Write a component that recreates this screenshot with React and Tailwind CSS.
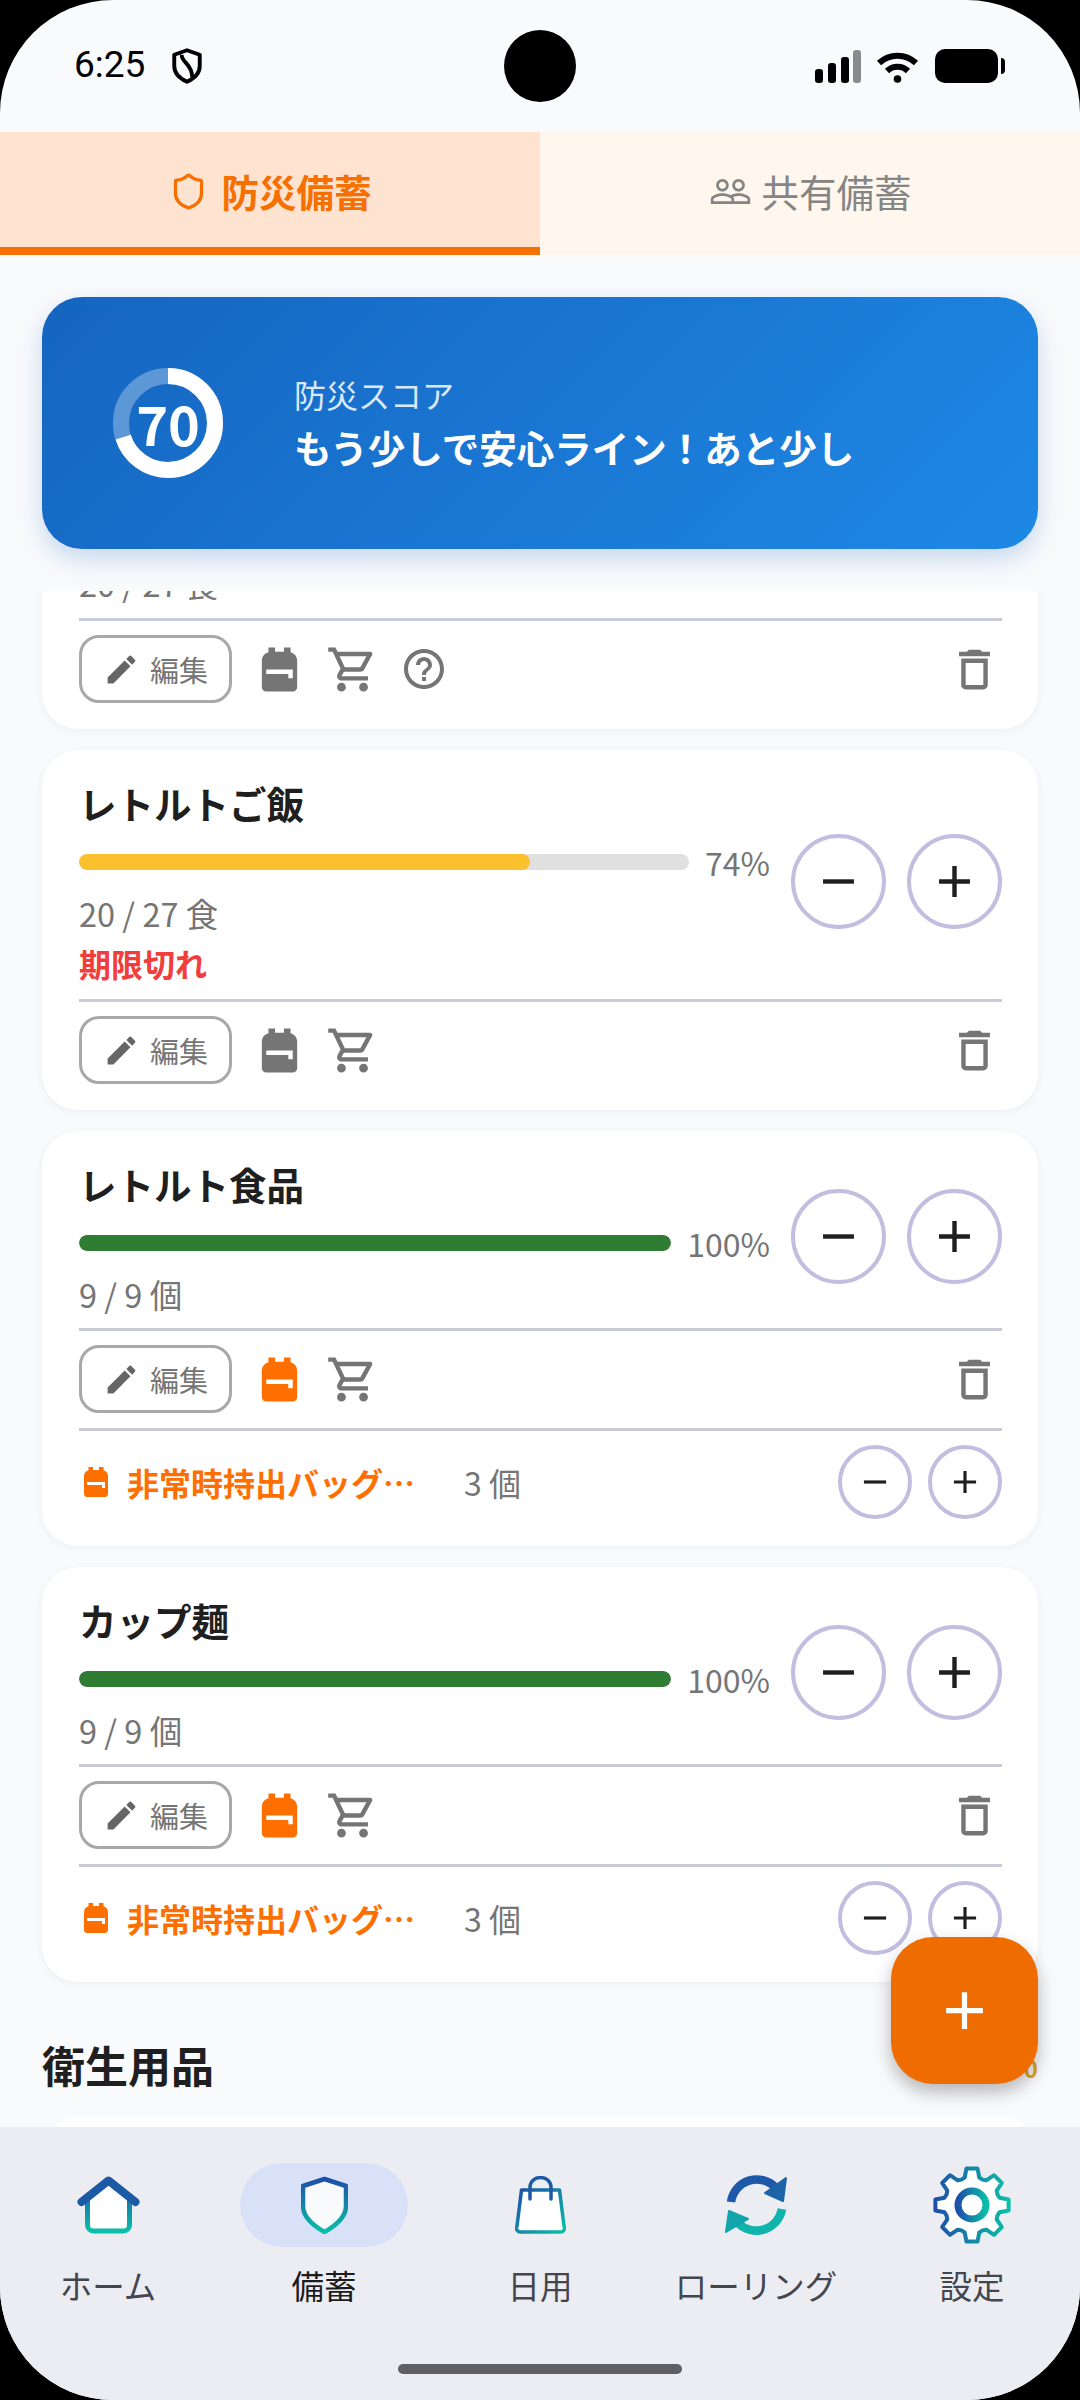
import React from 'react';
import { Shield } from 'lucide-react';
import {
  MdBackpack,
  MdEdit,
  MdOutlineShoppingCart,
  MdHelpOutline,
  MdDeleteOutline,
  MdPeopleOutline,
  MdAdd,
  MdRemove,
} from 'react-icons/md';

const items = [
  { name: 'レトルトご飯', pct: 74, color: 'bg-[#fbc02d]', count: '20 / 27 食', expired: true },
  { name: 'レトルト食品', pct: 100, color: 'bg-[#2e7d32]', count: '9 / 9 個', bag: true },
  { name: 'カップ麺', pct: 100, color: 'bg-[#2e7d32]', count: '9 / 9 個', bag: true },
];

function gearPath(cx, cy, outer, root) {
  const pts = [];
  for (let i = 0; i < 8; i++) {
    const a = (i * Math.PI) / 4 - Math.PI / 2;
    const p = (r, d) => `${(cx + r * Math.cos(a + d)).toFixed(1)} ${(cy + r * Math.sin(a + d)).toFixed(1)}`;
    pts.push(p(root, -0.26), p(outer, -0.15), p(outer, 0.15), p(root, 0.26), p(root - 1, 0.39));
  }
  return 'M' + pts.join(' L') + ' Z';
}

function StepButtons({ small }) {
  const box = small ? 'w-[74px] h-[74px]' : 'w-[95px] h-[95px]';
  const icon = small ? 38 : 53;
  return (
    <div className={small ? 'flex gap-[16px]' : 'flex gap-[21px]'}>
      <div className={`${box} rounded-full border-[4px] border-[#c2bedf] flex items-center justify-center text-[#1f1f1f]`}>
        <MdRemove size={icon} />
      </div>
      <div className={`${box} rounded-full border-[4px] border-[#c2bedf] flex items-center justify-center text-[#1f1f1f]`}>
        <MdAdd size={icon} />
      </div>
    </div>
  );
}

function ActionRow({ bagActive, help }) {
  return (
    <div className="flex items-center mt-[14px] text-[#757575]">
      <div className="w-[153px] h-[68px] rounded-[20px] border-[3px] border-[#a8a8a8] flex items-center pl-[21px] gap-[10px]">
        <MdEdit size={37} className="text-[#666666]" />
        <span className="text-[29px] leading-none">編集</span>
      </div>
      <MdBackpack size={53} className={bagActive ? 'ml-[21px] text-[#ff6f00]' : 'ml-[21px]'} />
      <MdOutlineShoppingCart size={53} className="ml-[20px]" />
      {help && <MdHelpOutline size={48} className="ml-[21px]" />}
      <MdDeleteOutline size={53} className="ml-auto mr-[1px]" />
    </div>
  );
}

function ItemCard({ item }) {
  return (
    <div className="bg-white rounded-[36px] shadow-[0_2px_10px_rgba(30,40,90,0.05)] pl-[37px] pr-[36px] pt-[30px] pb-[26px]">
      <div className="flex items-center">
        <div className="flex-1 min-w-0">
          <div className="h-[46px] flex items-center text-[37.5px] font-bold text-[#1f1f1f]">{item.name}</div>
          <div className="flex items-center h-[40px] mt-[16px]">
            <div className="flex-1 h-[16px] rounded-full bg-[#e0e0e0] overflow-hidden">
              <div className={`h-full rounded-full ${item.color}`} style={{ width: `${item.pct}%` }} />
            </div>
            <span className="ml-[16px] text-[32px] leading-none text-[#757575]">{item.pct}%</span>
          </div>
          <div className="h-[34px] mt-[14px] flex items-center text-[32.5px] text-[#757575]">{item.count}</div>
          {item.expired && (
            <div className="h-[38px] mt-[14px] flex items-center text-[32px] font-bold text-[#f23d3d]">期限切れ</div>
          )}
        </div>
        <div className="ml-[21px] shrink-0">
          <StepButtons />
        </div>
      </div>
      <div className="h-[3px] bg-[#c9cbd8] mt-[17px]" />
      <ActionRow bagActive={item.bag} />
      {item.bag && (
        <>
          <div className="h-[3px] bg-[#c9cbd8] mt-[15px]" />
          <div className="flex items-center mt-[14px] mb-[1px]">
            <MdBackpack size={36} className="text-[#ff6f00] ml-[-1px] mr-[13px]" />
            <span className="w-[337px] text-[32px] leading-none font-bold text-[#ff6f00] whitespace-nowrap">非常時持出バッグ…</span>
            <span className="text-[32px] leading-none text-[#757575]">3 個</span>
            <div className="ml-auto">
              <StepButtons small />
            </div>
          </div>
        </>
      )}
    </div>
  );
}

function NavIcon({ id, children, w, h, dir = 'v' }) {
  return (
    <svg width={w} height={h} viewBox={`0 0 ${w} ${h}`} fill="none">
      <defs>
        <linearGradient id={id} x1="0" y1="0" x2={dir === 'v' ? '0' : '1'} y2={dir === 'h' ? '0' : '1'}>
          <stop offset="0" stopColor="#1e4fa8" />
          <stop offset="1" stopColor="#0abfa8" />
        </linearGradient>
      </defs>
      {children}
    </svg>
  );
}

const HomeIcon = () => (
  <NavIcon id="g-home" w={63} h={58}>
    <path d="M10.5 22V49a6 6 0 0 0 6 6H46.500a6 6 0 0 0 6-6V22L31.500 6Z" fill="#fff" stroke="url(#g-home)" strokeWidth="5" strokeLinejoin="round" />
    <path d="M4.500 26L31.500 4.500L58.500 26" stroke="#1d5aa6" strokeWidth="8" strokeLinecap="round" strokeLinejoin="round" />
  </NavIcon>
);

const ShieldIcon = () => (
  <NavIcon id="g-shield" w={47} h={58}>
    <path d="M23.5 3L45 10V30C45 42 34 50 23.5 56C13 50 2 42 2 30V10Z" fill="#f8fafc" stroke="url(#g-shield)" strokeWidth="4.500" strokeLinejoin="round" />
  </NavIcon>
);

const BagIcon = () => (
  <NavIcon id="g-bag" w={51} h={58} dir="d">
    <path d="M6.5 14H44.5L49 50a4 4 0 0 1-4 6H6a4 4 0 0 1-4-6Z" fill="#fff" stroke="url(#g-bag)" strokeWidth="3.5" strokeLinejoin="round" />
    <path d="M15 23V11a10.500 9.500 0 0 1 21 0V23" stroke="#1d5aa6" strokeWidth="3.500" strokeLinecap="round" />
  </NavIcon>
);

const RefreshIcon = () => (
  <NavIcon id="g-ref" w={67} h={67}>
    <path d="M8 30A26 26 0 0 1 53 16" stroke="#1e58a8" strokeWidth="8.500" />
    <path d="M63 6L60 29L42 21Z" fill="#1d63a8" stroke="#1d63a8" strokeWidth="2" strokeLinejoin="round" />
    <path d="M59 37A26 26 0 0 1 15 51" stroke="#0fb4aa" strokeWidth="8.500" />
    <path d="M3 60L6 39L25 47Z" fill="#11a5ab" stroke="#11a5ab" strokeWidth="2" strokeLinejoin="round" />
  </NavIcon>
);

const GearIcon = () => (
  <NavIcon id="g-gear" w={80} h={80} dir="h">
    <path d={gearPath(40, 40, 37, 28.5)} fill="#fff" stroke="url(#g-gear)" strokeWidth="4" strokeLinejoin="round" />
    <circle cx="40" cy="40" r="14" fill="#fff" stroke="url(#g-gear)" strokeWidth="7" />
  </NavIcon>
);

const navItems = [
  { label: 'ホーム', Icon: HomeIcon },
  { label: '備蓄', Icon: ShieldIcon, active: true },
  { label: '日用', Icon: BagIcon },
  { label: 'ローリング', Icon: RefreshIcon },
  { label: '設定', Icon: GearIcon },
];

export default function App() {
  return (
    <div className="w-[1080px] h-[2400px] bg-black font-['Noto_Sans_CJK_JP','Noto_Sans',sans-serif]">
      <div className="relative w-full h-full rounded-[113px] overflow-hidden bg-[#f9fafc] flex flex-col">
        {/* status bar */}
        <div className="relative h-[132px] shrink-0 flex items-start">
          <span className="absolute left-[74px] top-[46px] font-['Roboto',sans-serif] text-[37px] leading-none text-black">6:25</span>
          <svg className="absolute left-[169px] top-[47px]" width="36" height="38" viewBox="0 0 24 25" fill="none" stroke="#000" strokeWidth="2.600" strokeLinejoin="round">
            <path d="M12 2L20.500 5V12.500C20.500 17.500 16.500 21 12 23C7.500 21 3.500 17.500 3.500 12.500V5Z" />
            <path d="M8.500 5C8 10 15.500 11 15.500 20" />
          </svg>
          <div className="absolute left-[504px] top-[30px] w-[72px] h-[72px] rounded-full bg-black" />
          <svg className="absolute left-[815px] top-[50px]" width="46" height="33" viewBox="0 0 46 33">
            <rect x="0" y="19" width="8" height="14" rx="3" fill="#000" />
            <rect x="13" y="13" width="8" height="20" rx="3" fill="#000" />
            <rect x="26" y="7" width="8" height="26" rx="3" fill="#000" />
            <rect x="38" y="0" width="8" height="33" rx="3" fill="#8a8a8a" />
          </svg>
          <svg className="absolute left-[876px] top-[50px]" width="43" height="33" viewBox="0 0 43 33" fill="none" stroke="#000" strokeWidth="6">
            <path d="M3 13A27 27 0 0 1 40 13" />
            <path d="M11 21A15 15 0 0 1 32 21" />
            <circle cx="21.500" cy="29" r="3.800" fill="#000" stroke="none" />
          </svg>
          <div className="absolute left-[935px] top-[49px] w-[63px] h-[34px] rounded-[10px] bg-black" />
          <div className="absolute left-[1001px] top-[58px] w-[4px] h-[16px] rounded-r-full bg-black" />
        </div>

        {/* tabs */}
        <div className="h-[123px] shrink-0 flex">
          <div className="flex-1 bg-[#fde3d0] border-b-[8px] border-[#f57000] flex items-center justify-center gap-[14px] text-[#f57000] pt-[3px]">
            <Shield size={39} strokeWidth={2} />
            <span className="text-[37.5px] font-bold leading-none">防災備蓄</span>
          </div>
          <div className="flex-1 bg-[#fff7ed] flex items-center justify-center gap-[10px] text-[#858585] pb-[5px]">
            <MdPeopleOutline size={43} />
            <span className="text-[37.5px] leading-none">共有備蓄</span>
          </div>
        </div>

        {/* score */}
        <div className="mx-[42px] mt-[42px] h-[252px] shrink-0 rounded-[40px] bg-[linear-gradient(135deg,#1565c0,#1e88e5)] shadow-[0_10px_24px_rgba(21,101,192,0.22)] flex items-center pl-[71px]">
          <div className="relative w-[110px] h-[110px] shrink-0">
            <svg width="110" height="110" viewBox="0 0 110 110" fill="none" className="-rotate-90">
              <circle cx="55" cy="55" r="47" stroke="#ffffff" strokeOpacity="0.3" strokeWidth="16" />
              <circle cx="55" cy="55" r="47" stroke="#ffffff" strokeWidth="16" strokeDasharray="206.700 295.300" />
            </svg>
            <span className="absolute inset-0 flex items-center justify-center text-[54px] font-bold leading-none text-white">70</span>
          </div>
          <div className="ml-[71px]">
            <div className="text-[32px] leading-[40px] text-[#dbe8f8]">防災スコア</div>
            <div className="text-[37.5px] leading-[50px] mt-[8px] font-bold text-white">もう少しで安心ライン！あと少し</div>
          </div>
        </div>

        {/* scrolling list */}
        <div className="mt-[42px] flex-1 min-h-0 overflow-hidden px-[42px]">
          <div className="-mt-[171px] flex flex-col gap-[21px]">
            <div className="bg-white rounded-[36px] shadow-[0_2px_10px_rgba(30,40,90,0.05)] pl-[37px] pr-[36px] pt-[146px] pb-[26px]">
              <div className="h-[34px] flex items-center text-[32.5px] text-[#757575]">20 / 27 食</div>
              <div className="h-[3px] bg-[#c9cbd8] mt-[18px]" />
              <ActionRow help />
            </div>
            {items.map((item) => (
              <ItemCard key={item.name} item={item} />
            ))}
          </div>
          <div className="flex items-center justify-between h-[50px] mt-[57px]">
            <span className="text-[43px] font-bold text-[#1f1f1f]">衛生用品</span>
            <span className="text-[24px] font-bold text-[#e0a820] mt-[8px]">0</span>
          </div>
          <div className="mt-[28px] h-[60px] bg-white rounded-t-[36px]" />
        </div>

        {/* add button */}
        <div className="absolute left-[891px] top-[1937px] w-[147px] h-[147px] rounded-[42px] bg-[#ef6c00] shadow-[0_8px_18px_rgba(0,0,0,0.28)] flex items-center justify-center text-white">
          <MdAdd size={63} />
        </div>

        {/* bottom nav */}
        <div className="relative h-[273px] shrink-0 bg-[#ecedf3]">
          <div className="grid grid-cols-5 pt-[36px]">
            {navItems.map(({ label, Icon, active }) => (
              <div key={label} className="flex flex-col items-center">
                <div className={active ? 'w-[168px] h-[84px] rounded-full bg-[#d9e1f8] flex items-center justify-center' : 'w-[168px] h-[84px] flex items-center justify-center'}>
                  <Icon />
                </div>
                <span className={active ? 'mt-[18px] text-[32.5px] leading-[40px] text-[#1c1c20] whitespace-nowrap' : 'mt-[18px] text-[32.5px] leading-[40px] text-[#44464f] whitespace-nowrap'}>{label}</span>
              </div>
            ))}
          </div>
          <div className="absolute left-[398px] top-[237px] w-[284px] h-[10px] rounded-full bg-[#606064]" />
        </div>
      </div>
    </div>
  );
}
